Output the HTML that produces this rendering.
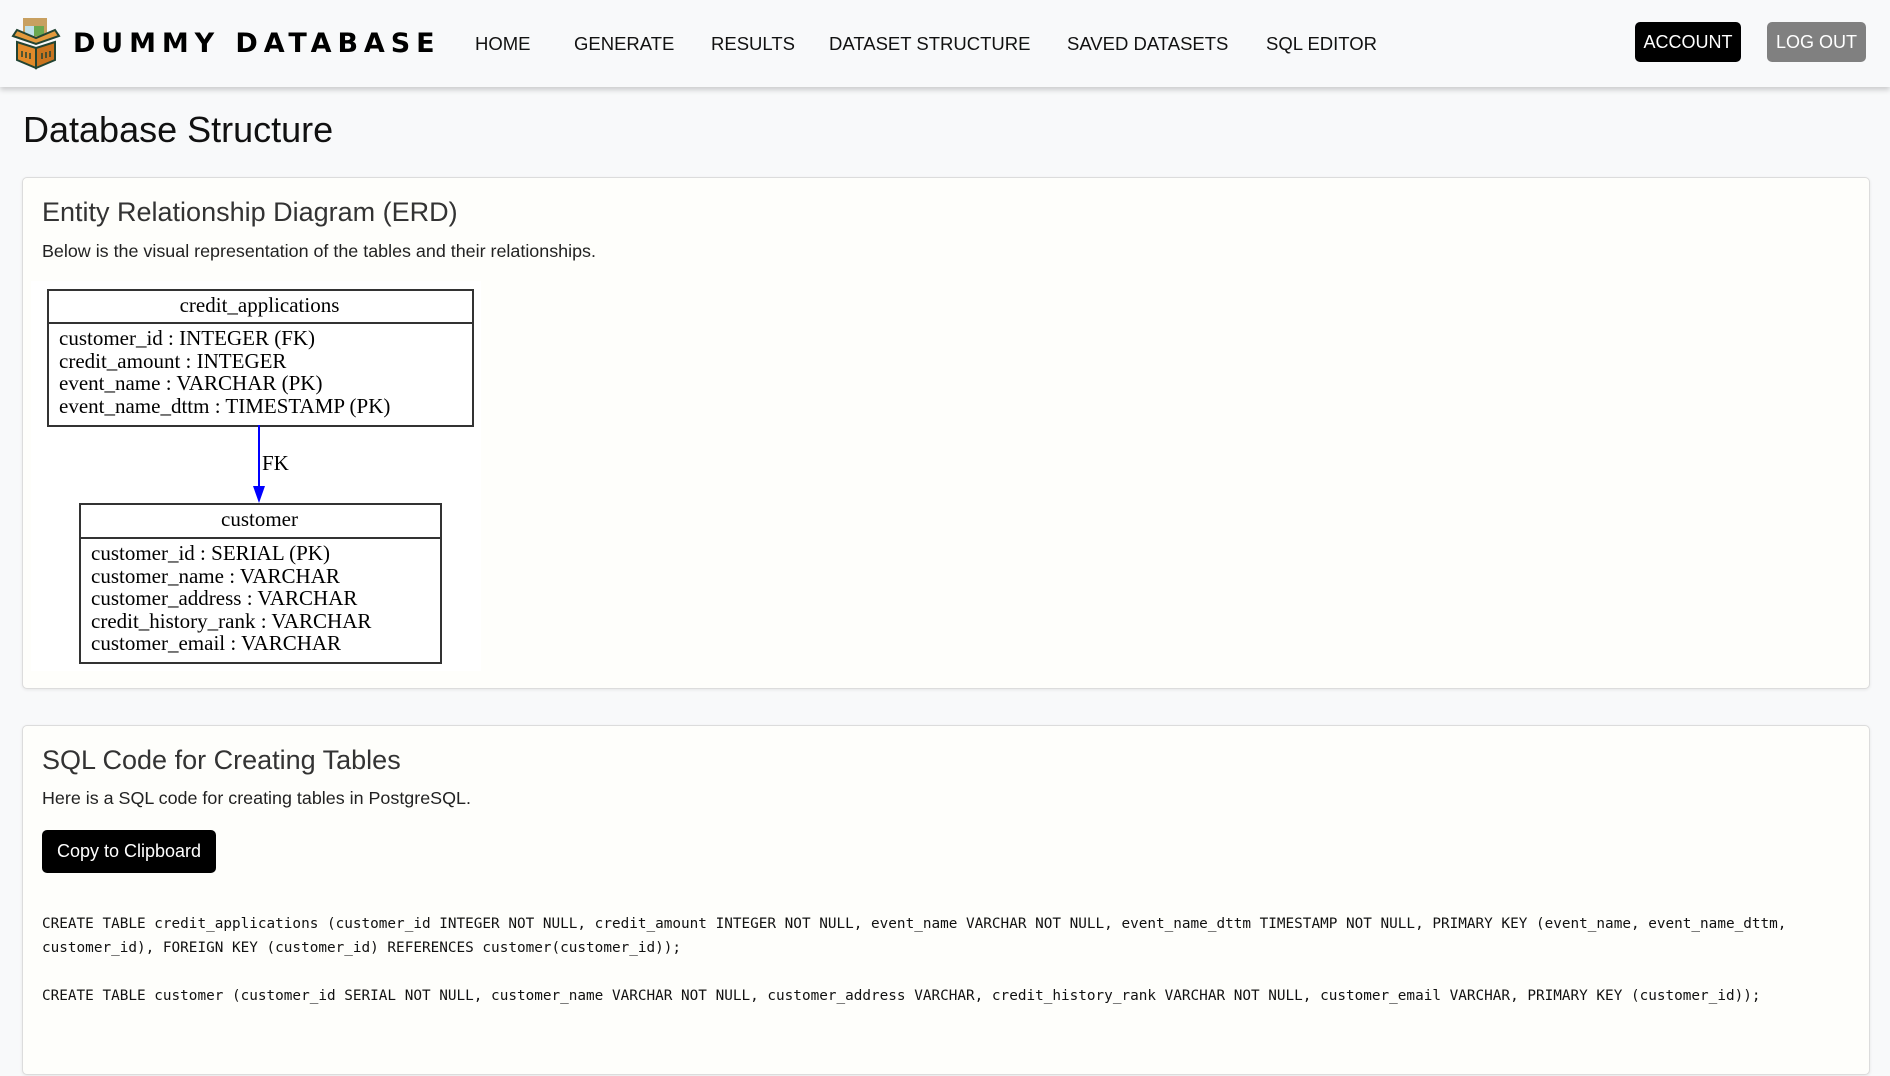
<!DOCTYPE html>
<html><head><meta charset="utf-8"><style>
body{margin:0;width:1890px;height:1076px;background:#f8f9fa;font-family:"Liberation Sans","DejaVu Sans",sans-serif;color:#212529;overflow:hidden;position:relative}
.nav{position:absolute;left:0;top:0;width:1890px;height:87px;background:#f8f9fa;box-shadow:0 3px 5px rgba(0,0,0,.18)}
.brand{position:absolute;left:73px;top:28px;font-weight:900;font-size:27px;letter-spacing:5.9px;color:#000;font-family:"DejaVu Sans",sans-serif}
.nl{position:absolute;top:33px;font-size:18.5px;color:#111}
.btn{position:absolute;top:22px;height:40px;line-height:40px;color:#fff;font-size:18px;border-radius:5px;text-align:center}
.card{position:absolute;left:22px;width:1846px;background:#fefefb;border:1px solid #dcdcdc;border-radius:5px;box-shadow:0 1px 3px rgba(0,0,0,.08)}
h1{position:absolute;left:23px;top:109px;margin:0;font-weight:500;font-size:36px;color:#111}
.h2{position:absolute;left:19px;font-size:27px;color:#333}
.p{position:absolute;left:19px;font-size:17.9px;color:#222}
.erd{position:absolute;font-family:"Liberation Serif",serif;font-size:21px;color:#000}
.code{position:absolute;left:19px;font-family:"DejaVu Sans Mono",monospace;font-size:14.35px;color:#111;white-space:pre;line-height:24px}
</style></head><body>
<div class="nav">
<svg style="position:absolute;left:9px;top:14px" width="54" height="56" viewBox="0 0 54 56">
<rect x="14" y="4" width="24" height="20" fill="#c8a060"/>
<rect x="16" y="12" width="10" height="10" fill="#bfe0e8"/><rect x="25" y="12" width="10" height="10" fill="#6aa84f"/>
<path d="M4 22 L27 30 L50 22 L46 16 L27 24 L8 16 Z" fill="#e39a3d" stroke="#243" stroke-width="2"/>
<path d="M8 28 L27 34 L27 54 L8 46 Z" fill="#e08a2a" stroke="#243" stroke-width="2"/>
<path d="M46 28 L27 34 L27 54 L46 46 Z" fill="#c9741f" stroke="#243" stroke-width="2"/>
<path d="M13 37v6M17 38v6M21 39v6M33 39v6M37 38v6M41 37v6" stroke="#243" stroke-width="1.5"/>
</svg>
<div class="brand">DUMMY DATABASE</div>
<div class="nl" style="left:475px">HOME</div>
<div class="nl" style="left:574px">GENERATE</div>
<div class="nl" style="left:711px">RESULTS</div>
<div class="nl" style="left:829px">DATASET STRUCTURE</div>
<div class="nl" style="left:1067px">SAVED DATASETS</div>
<div class="nl" style="left:1266px">SQL EDITOR</div>
<div class="btn" style="left:1635px;width:106px;background:#000">ACCOUNT</div>
<div class="btn" style="left:1767px;width:99px;background:#808080">LOG OUT</div>
</div>
<h1>Database Structure</h1>
<div class="card" style="top:177px;height:510px">
<div class="h2" style="top:19px">Entity Relationship Diagram (ERD)</div>
<div class="p" style="top:63px">Below is the visual representation of the tables and their relationships.</div>
<div style="position:absolute;left:8px;top:103px;width:450px;height:390px;background:#fff"></div>
</div>
<div style="position:absolute;left:47px;top:289px;width:423px;height:134px;border:2px solid #333"></div>
<div style="position:absolute;left:47px;top:322px;width:425px;height:2px;background:#333"></div>
<div class="erd" style="left:47px;width:425px;top:293px;text-align:center">credit_applications</div>
<div class="erd" style="left:59px;top:327px;line-height:22.7px">customer_id : INTEGER (FK)<br>credit_amount : INTEGER<br>event_name : VARCHAR (PK)<br>event_name_dttm : TIMESTAMP (PK)</div>
<div style="position:absolute;left:258px;top:425px;width:2px;height:68px;background:#00f"></div>
<svg style="position:absolute;left:252px;top:486px" width="14" height="17"><path d="M1 0 L13 0 L7 17 Z" fill="#00f"/></svg>
<div class="erd" style="left:262px;top:451px">FK</div>
<div style="position:absolute;left:79px;top:503px;width:359px;height:157px;border:2px solid #333"></div>
<div style="position:absolute;left:79px;top:537px;width:361px;height:2px;background:#333"></div>
<div class="erd" style="left:79px;width:361px;top:507px;text-align:center">customer</div>
<div class="erd" style="left:91px;top:542px;line-height:22.5px">customer_id : SERIAL (PK)<br>customer_name : VARCHAR<br>customer_address : VARCHAR<br>credit_history_rank : VARCHAR<br>customer_email : VARCHAR</div>
<div class="card" style="top:725px;height:348px">
<div class="h2" style="top:19px">SQL Code for Creating Tables</div>
<div class="p" style="top:62px">Here is a SQL code for creating tables in PostgreSQL.</div>
<div style="position:absolute;left:19px;top:104px;width:174px;height:43px;line-height:43px;background:#000;color:#fff;border-radius:5px;text-align:center;font-size:18px">Copy to Clipboard</div>
<div class="code" style="top:186px">CREATE TABLE credit_applications (customer_id INTEGER NOT NULL, credit_amount INTEGER NOT NULL, event_name VARCHAR NOT NULL, event_name_dttm TIMESTAMP NOT NULL, PRIMARY KEY (event_name, event_name_dttm,
customer_id), FOREIGN KEY (customer_id) REFERENCES customer(customer_id));

CREATE TABLE customer (customer_id SERIAL NOT NULL, customer_name VARCHAR NOT NULL, customer_address VARCHAR, credit_history_rank VARCHAR NOT NULL, customer_email VARCHAR, PRIMARY KEY (customer_id));</div>
</div>
</body></html>
